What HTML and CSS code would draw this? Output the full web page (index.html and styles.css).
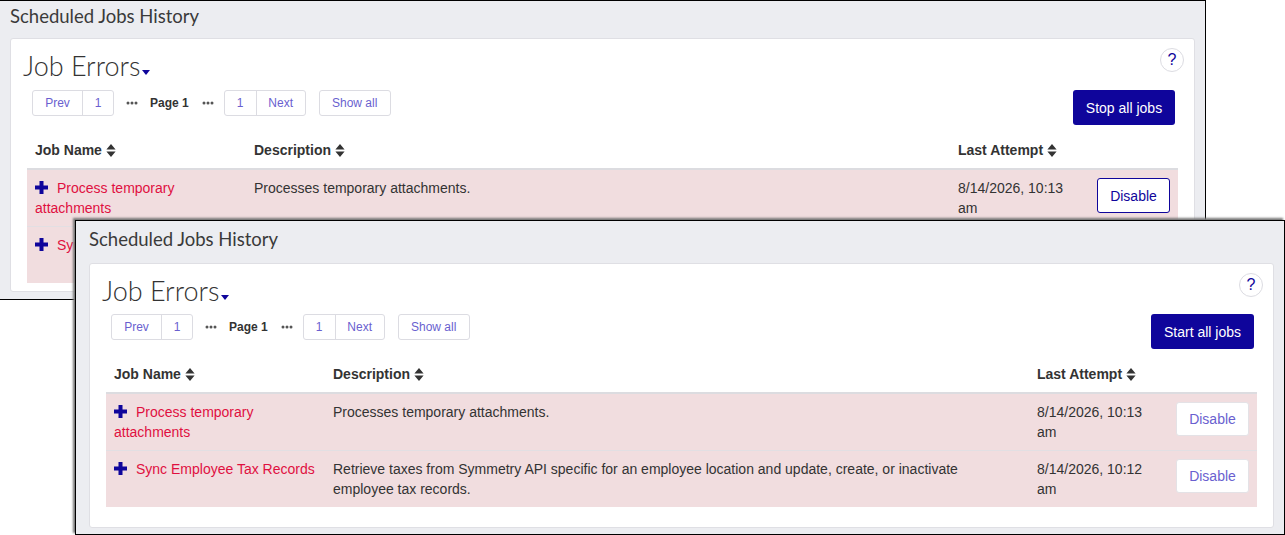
FILE: index.html
```html
<!DOCTYPE html>
<html lang="en">
<head>
  <meta charset="UTF-8">
  <meta name="viewport" content="width=device-width, initial-scale=1.0">
  <title>Scheduled Jobs History</title>
  <link rel="stylesheet" href="styles.css">
</head>
<body>
  <svg class="icon-defs" width="0" height="0" aria-hidden="true">
    <symbol id="sort" viewBox="0 0 10 13"><path d="M5 0l4.600 5.400h-9.200zM5 13l4.600-5.400h-9.200z"/></symbol>
    <symbol id="plus" viewBox="0 0 13 13"><path d="M4.500 0h4v4.500h4.500v4h-4.500v4.500h-4v-4.500h-4.500v-4h4.500z"/></symbol>
    <symbol id="dots" viewBox="0 0 12 4"><circle cx="2" cy="2" r="1.500"/><circle cx="6" cy="2" r="1.500"/><circle cx="10" cy="2" r="1.500"/></symbol>
  </svg>

  <section class="window window-back">
    <h2 class="window-title">Scheduled Jobs History</h2>
    <div class="panel">
      <div class="panel-header">
        <h1 class="panel-title">Job Errors<span class="caret"></span></h1>
        <button class="help-btn">?</button>
      </div>
      <div class="toolbar">
        <div class="pager">
          <div class="page-group"><a class="page-link prev">Prev</a><a class="page-link num">1</a></div>
          <svg class="dots"><use href="#dots"/></svg>
          <span class="page-now">Page 1</span>
          <svg class="dots"><use href="#dots"/></svg>
          <div class="page-group"><a class="page-link num">1</a><a class="page-link next">Next</a></div>
          <a class="show-all">Show all</a>
        </div>
        <button class="primary-btn stop">Stop all jobs</button>
      </div>
      <table class="jobs">
        <thead>
          <tr>
            <th class="col-name">Job Name <svg class="sort-icon"><use href="#sort"/></svg></th>
            <th class="col-desc">Description <svg class="sort-icon"><use href="#sort"/></svg></th>
            <th class="col-last">Last Attempt <svg class="sort-icon"><use href="#sort"/></svg></th>
            <th class="col-action"></th>
          </tr>
        </thead>
        <tbody>
          <tr>
            <td><svg class="plus-icon"><use href="#plus"/></svg><a class="job-link">Process temporary attachments</a></td>
            <td>Processes temporary attachments.</td>
            <td>8/14/2026, 10:13 am</td>
            <td><button class="disable-btn active">Disable</button></td>
          </tr>
          <tr>
            <td><svg class="plus-icon"><use href="#plus"/></svg><a class="job-link">Sync Employee Tax Records</a></td>
            <td>Retrieve taxes from Symmetry API specific for an employee location and update, create, or inactivate employee tax records.</td>
            <td>8/14/2026, 10:12 am</td>
            <td><button class="disable-btn">Disable</button></td>
          </tr>
        </tbody>
      </table>
    </div>
  </section>

  <section class="window window-front">
    <h2 class="window-title">Scheduled Jobs History</h2>
    <div class="panel">
      <div class="panel-header">
        <h1 class="panel-title">Job Errors<span class="caret"></span></h1>
        <button class="help-btn">?</button>
      </div>
      <div class="toolbar">
        <div class="pager">
          <div class="page-group"><a class="page-link prev">Prev</a><a class="page-link num">1</a></div>
          <svg class="dots"><use href="#dots"/></svg>
          <span class="page-now">Page 1</span>
          <svg class="dots"><use href="#dots"/></svg>
          <div class="page-group"><a class="page-link num">1</a><a class="page-link next">Next</a></div>
          <a class="show-all">Show all</a>
        </div>
        <button class="primary-btn start">Start all jobs</button>
      </div>
      <table class="jobs">
        <thead>
          <tr>
            <th class="col-name">Job Name <svg class="sort-icon"><use href="#sort"/></svg></th>
            <th class="col-desc">Description <svg class="sort-icon"><use href="#sort"/></svg></th>
            <th class="col-last">Last Attempt <svg class="sort-icon"><use href="#sort"/></svg></th>
            <th class="col-action"></th>
          </tr>
        </thead>
        <tbody>
          <tr>
            <td><svg class="plus-icon"><use href="#plus"/></svg><a class="job-link">Process temporary attachments</a></td>
            <td>Processes temporary attachments.</td>
            <td>8/14/2026, 10:13 am</td>
            <td><button class="disable-btn">Disable</button></td>
          </tr>
          <tr>
            <td><svg class="plus-icon"><use href="#plus"/></svg><a class="job-link">Sync Employee Tax Records</a></td>
            <td>Retrieve taxes from Symmetry API specific for an employee location and update, create, or inactivate employee tax records.</td>
            <td>8/14/2026, 10:12 am</td>
            <td><button class="disable-btn">Disable</button></td>
          </tr>
        </tbody>
      </table>
    </div>
  </section>
</body>
</html>
```

FILE: styles.css
```css
html, body { margin: 0; height: 100%; overflow: hidden; }
body { position: relative; background-color: #fff; color: #333; font-family: "Liberation Sans", Arial, sans-serif; font-size: 14px; line-height: 20px; }
.icon-defs { position: absolute; }

.window { position: absolute; box-sizing: border-box; overflow: hidden; background-color: #ecedf1; border: 1px solid #000; }
.window-back { left: -1px; top: 0; width: 1207px; height: 300px; padding: 0 10px 0 10px; }
.window-front { left: 75px; top: 220px; width: 1210px; height: 315px; padding: 0 10px 0 13px; box-shadow: -2px -2px 2px #777; overflow: visible; }

.window-title { margin: 0; font-family: Lato, sans-serif; font-size: 18.500px; font-weight: 400; line-height: 22px; color: #3a3a3a; }
.window-back .window-title { padding: 4px 0 11px; }
.window-front .window-title { padding: 7px 0 13px; }

.panel { box-sizing: border-box; background-color: #fff; border: 1px solid #dfdfe4; border-radius: 3px; }
.window-back .panel { height: 254px; }
.window-front .panel { height: 265px; }

.panel-header { display: flex; justify-content: space-between; align-items: flex-start; padding: 9px 10px 0 12px; box-sizing: content-box; }
.window-back .panel-header { height: 42px; }
.window-front .panel-header { height: 41px; }
.panel-title { margin: 3px 0 0; font-family: Lato, sans-serif; font-size: 27px; font-weight: 300; line-height: 30px; color: #333; }
.caret { display: inline-block; margin-left: 2px; vertical-align: 1px; border-style: solid; border-width: 5px 4.500px 0; border-color: #0f059b transparent transparent; }
.help-btn { box-sizing: border-box; width: 24px; height: 24px; padding: 0; background-color: #fff; border: 1px solid #dcdce2; border-radius: 50%; color: #0f059b; font: 16px/20px "Liberation Sans", Arial, sans-serif; }

.toolbar { display: flex; justify-content: space-between; align-items: flex-start; margin: 0 19px 0 21px; }
.pager { display: flex; align-items: center; height: 26px; font-size: 12px; }
.page-group { display: flex; border: 1px solid #dcdce2; border-radius: 3px; }
.page-link { box-sizing: border-box; height: 24px; line-height: 24px; text-align: center; color: #6a5fcf; }
.page-link + .page-link { border-left: 1px solid #dcdce2; }
.page-link.prev { width: 49px; }
.page-link.next { width: 49px; }
.page-link.num { width: 31px; }
.dots { width: 12px; height: 4px; fill: #555; }
.page-group:first-child { margin-right: 12px; }
.page-now { margin: 0 13px 0 12px; font-weight: bold; color: #333; }
.dots + .page-group { margin-left: 10px; }
.show-all { box-sizing: border-box; width: 72px; height: 26px; margin-left: 13px; border: 1px solid #dcdce2; border-radius: 3px; line-height: 24px; text-align: center; color: #6a5fcf; }
.primary-btn { box-sizing: border-box; height: 35px; padding: 0; background-color: #0f059b; border: 0; border-radius: 3px; color: #fff; font: 14px/20px "Liberation Sans", Arial, sans-serif; }
.primary-btn.stop { width: 102px; }
.primary-btn.start { width: 103px; }

.jobs { width: 1151px; margin: 0 16px; border-collapse: collapse; table-layout: fixed; }
.jobs th { height: 44px; box-sizing: border-box; padding: 14px 8px 8px; text-align: left; font-weight: bold; border-bottom: 2px solid #dcdce0; }
.col-name { width: 219px; }
.col-desc { width: 704px; }
.col-last { width: 139px; }
.col-action { width: 89px; }
.sort-icon { width: 10px; height: 13px; vertical-align: -2px; fill: #333; }
.jobs td { padding: 8px; vertical-align: top; background-color: #f1dddf; border-top: 1px solid #e2dfe3; }
.jobs tbody tr:first-child td { border-top: 0; }
.plus-icon { width: 13px; height: 13px; margin-right: 9px; vertical-align: -1px; fill: #0f059b; }
.job-link { color: #e0103f; }
.disable-btn { box-sizing: border-box; width: 73px; height: 35px; padding: 0; background-color: #fff; border: 1px solid #e4e2e6; border-radius: 3px; color: #6a5fcf; font: 14px/20px "Liberation Sans", Arial, sans-serif; }
.disable-btn.active { border-color: #0f059b; color: #0f059b; }
.window-front .disable-btn { height: 34px; }
```
